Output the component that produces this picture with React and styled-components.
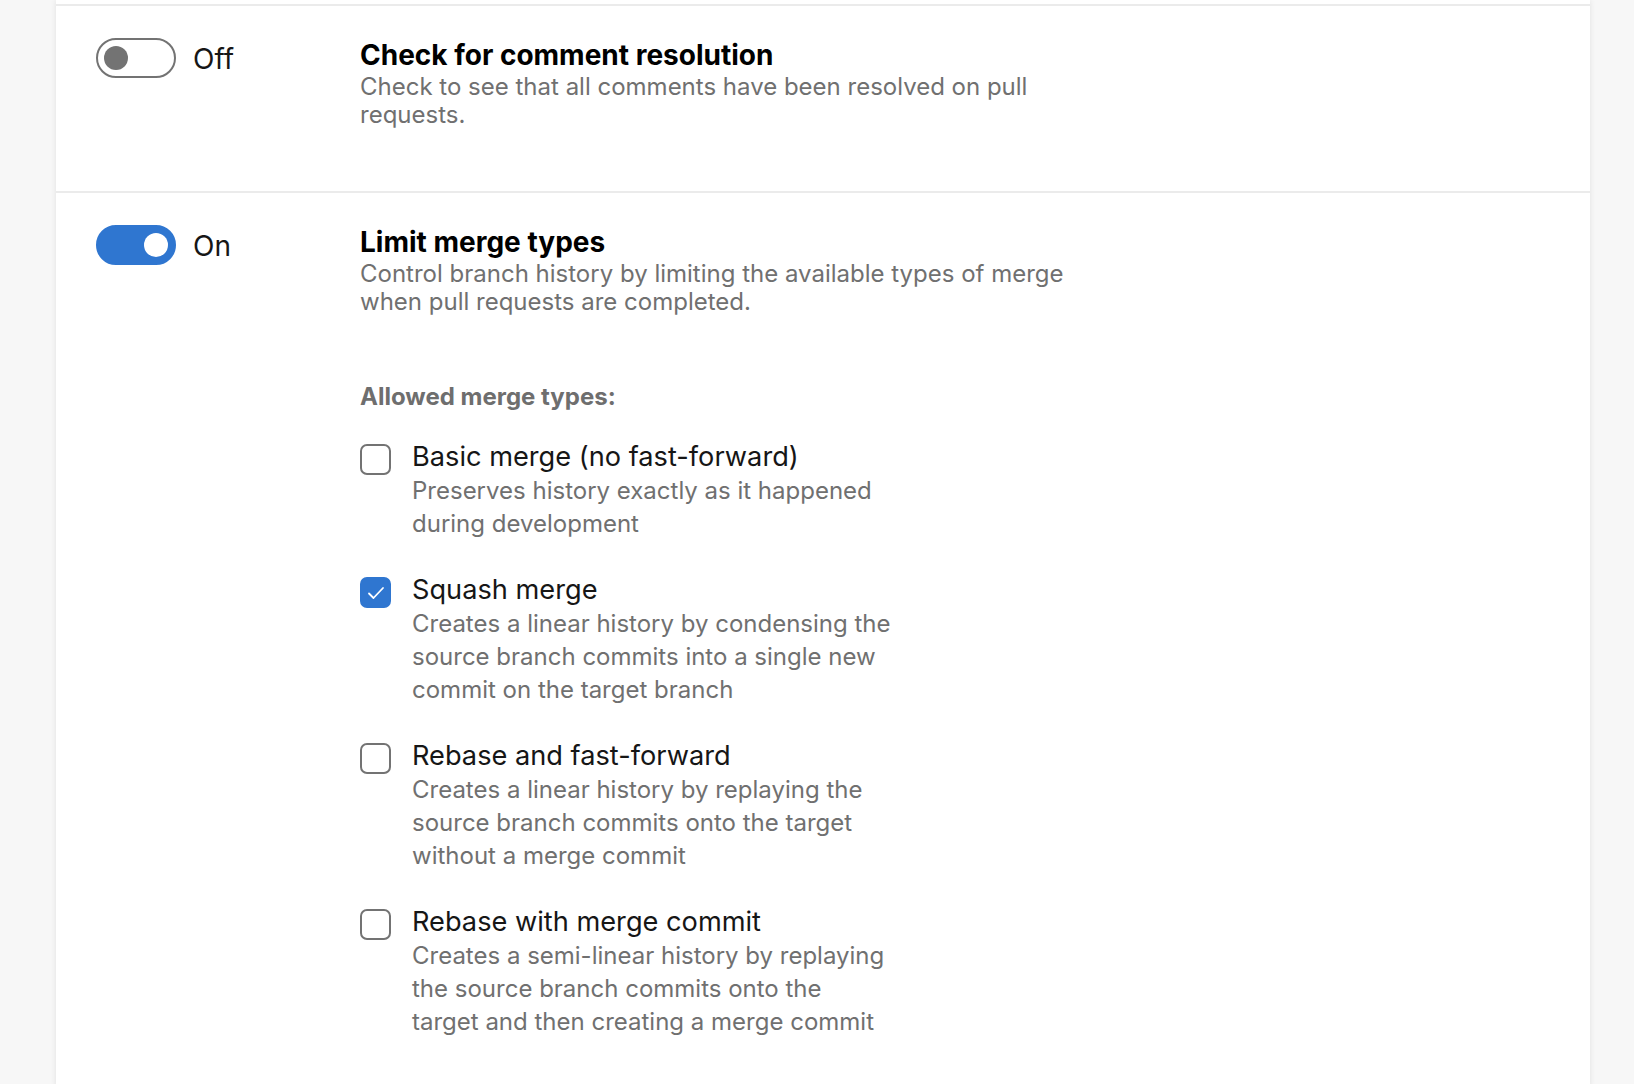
import { useState } from 'react';
import styled, { createGlobalStyle } from 'styled-components';

const GlobalStyle = createGlobalStyle`
  html, body {
    margin: 0;
    padding: 0;
    background: #f7f7f7;
    font-family: Inter, "Liberation Sans", Arial, sans-serif;
    -webkit-font-smoothing: antialiased;
  }
`;

const Page = styled.div`
  min-height: 100vh;
  padding: 0 44px 0 56px;
  overflow: hidden;
`;

const SettingsPanel = styled.div`
  background: #ffffff;
  min-height: 100vh;
  padding-top: 4px;
  box-shadow: 0 0 6px rgba(0, 0, 0, 0.09);
`;

const PolicySection = styled.section`
  display: grid;
  grid-template-columns: 264px 1fr;
  border-top: 2px solid #ebebeb;
  padding: 32px 40px ${(p) => p.$bottom || 64}px;
`;

const ToggleCell = styled.div`
  display: flex;
  align-items: center;
  gap: 17px;
  height: 40px;
`;

const SwitchTrack = styled.button`
  position: relative;
  width: 80px;
  height: 40px;
  box-sizing: border-box;
  border-radius: 20px;
  padding: 0;
  cursor: pointer;
  border: 2px solid ${(p) => (p.$on ? '#2f76d0' : '#737373')};
  background: ${(p) => (p.$on ? '#2f76d0' : '#ffffff')};
`;

const Knob = styled.span`
  position: absolute;
  top: 6px;
  left: ${(p) => (p.$on ? '46px' : '6px')};
  width: 24px;
  height: 24px;
  border-radius: 50%;
  background: ${(p) => (p.$on ? '#ffffff' : '#737373')};
`;

const ToggleLabel = styled.span`
  font-size: 28px;
  line-height: 40px;
  padding-top: 2px;
  color: #161616;
`;

const PolicyBody = styled.div`
  display: flex;
  flex-direction: column;
  padding-top: 1px;
`;

const PolicyTitle = styled.h3`
  margin: 0;
  font-size: 28px;
  line-height: 32px;
  font-weight: 700;
  color: #000;
`;

const PolicyDescription = styled.p`
  margin: 2px 0 0;
  max-width: 720px;
  font-size: 24px;
  line-height: 28px;
  color: #707070;
`;

const OptionGroupLabel = styled.div`
  margin-top: 67px;
  font-size: 24px;
  line-height: 28px;
  font-weight: 700;
  color: #6e6e6e;
`;

const OptionList = styled.div`
  display: flex;
  flex-direction: column;
  gap: 33px;
  margin-top: 29px;
`;

const OptionRow = styled.label`
  display: flex;
  align-items: flex-start;
  gap: 21px;
  cursor: pointer;
`;

const CheckboxBox = styled.span`
  flex: none;
  display: flex;
  align-items: center;
  justify-content: center;
  width: 31px;
  height: 31px;
  margin-top: 4px;
  box-sizing: border-box;
  border-radius: 7px;
  border: 2px solid ${(p) => (p.$checked ? '#2f76d0' : '#737373')};
  background: ${(p) => (p.$checked ? '#2f76d0' : '#ffffff')};
`;

const OptionText = styled.div`
  display: flex;
  flex-direction: column;
  max-width: 480px;
`;

const OptionTitle = styled.span`
  font-size: 27.2px;
  line-height: 34px;
  color: #161616;
`;

const OptionDescription = styled.span`
  font-size: 24px;
  line-height: 33px;
  color: #707070;
`;

function Switch({ on, onToggle }) {
  return (
    <ToggleCell>
      <SwitchTrack $on={on} onClick={onToggle} aria-pressed={on}>
        <Knob $on={on} />
      </SwitchTrack>
      <ToggleLabel>{on ? 'On' : 'Off'}</ToggleLabel>
    </ToggleCell>
  );
}

function Checkbox({ checked }) {
  return (
    <CheckboxBox $checked={checked}>
      {checked && (
        <svg width="18" height="14" viewBox="0 0 18 14" fill="none">
          <polyline points="2,7.5 6.5,12 16,2" stroke="#fff" strokeWidth="1.8" strokeLinecap="round" strokeLinejoin="round" />
        </svg>
      )}
    </CheckboxBox>
  );
}

const mergeTypes = [
  { id: 'basic', title: 'Basic merge (no fast-forward)', desc: 'Preserves history exactly as it happened during development' },
  { id: 'squash', title: 'Squash merge', desc: 'Creates a linear history by condensing the source branch commits into a single new commit on the target branch' },
  { id: 'rebase', title: 'Rebase and fast-forward', desc: 'Creates a linear history by replaying the source branch commits onto the target without a merge commit' },
  { id: 'semi', title: 'Rebase with merge commit', desc: 'Creates a semi-linear history by replaying the source branch commits onto the target and then creating a merge commit' },
];

export default function App() {
  const [comments, setComments] = useState(false);
  const [limitMerge, setLimitMerge] = useState(true);
  const [allowed, setAllowed] = useState({ squash: true });

  return (
    <>
      <GlobalStyle />
      <Page>
        <SettingsPanel>
          <PolicySection $bottom={62}>
            <Switch on={comments} onToggle={() => setComments(!comments)} />
            <PolicyBody>
              <PolicyTitle>Check for comment resolution</PolicyTitle>
              <PolicyDescription>
                Check to see that all comments have been resolved on pull requests.
              </PolicyDescription>
            </PolicyBody>
          </PolicySection>

          <PolicySection $bottom={48}>
            <Switch on={limitMerge} onToggle={() => setLimitMerge(!limitMerge)} />
            <PolicyBody>
              <PolicyTitle>Limit merge types</PolicyTitle>
              <PolicyDescription>
                Control branch history by limiting the available types of merge when pull requests are completed.
              </PolicyDescription>
              <OptionGroupLabel>Allowed merge types:</OptionGroupLabel>
              <OptionList>
                {mergeTypes.map((m) => (
                  <OptionRow key={m.id} onClick={() => setAllowed({ ...allowed, [m.id]: !allowed[m.id] })}>
                    <Checkbox checked={!!allowed[m.id]} />
                    <OptionText>
                      <OptionTitle>{m.title}</OptionTitle>
                      <OptionDescription>{m.desc}</OptionDescription>
                    </OptionText>
                  </OptionRow>
                ))}
              </OptionList>
            </PolicyBody>
          </PolicySection>
        </SettingsPanel>
      </Page>
    </>
  );
}
